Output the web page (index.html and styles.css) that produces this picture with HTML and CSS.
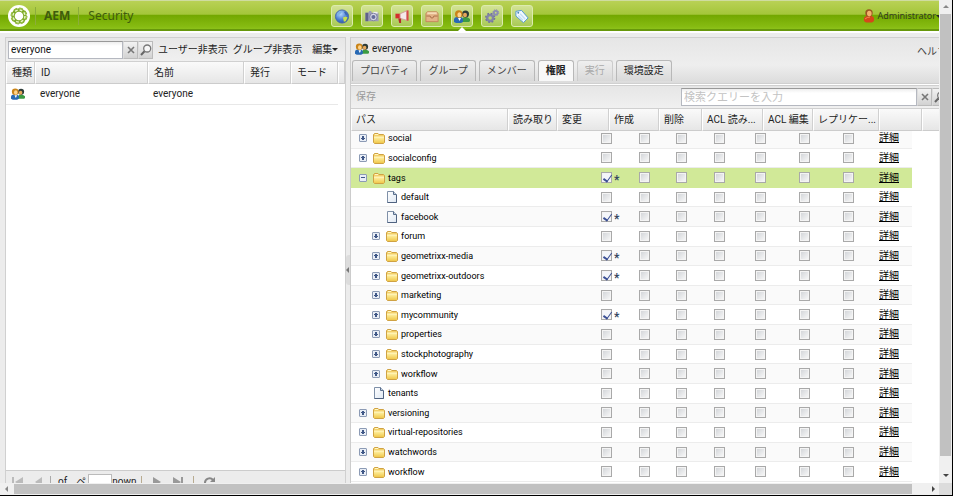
FILE: index.html
```
<!DOCTYPE html>
<html lang="ja">
<head>
<meta charset="utf-8">
<title>AEM Security</title>
<link rel="stylesheet" href="styles.css">
</head>
<body>
<svg class="defs" aria-hidden="true">
  <defs>
    <linearGradient id="fold" x1="0" y1="0" x2="0" y2="1"><stop offset="0" stop-color="#fff3a8"/><stop offset="1" stop-color="#f0c84c"/></linearGradient>
    <linearGradient id="paper" x1="0" y1="0" x2="1" y2="1"><stop offset="0" stop-color="#fff"/><stop offset="1" stop-color="#dfe8f3"/></linearGradient>
    <radialGradient id="ball" cx=".4" cy=".3" r=".8"><stop offset="0" stop-color="#b5d9ff"/><stop offset=".6" stop-color="#4478cf"/><stop offset="1" stop-color="#274f9f"/></radialGradient>
  </defs>
  <symbol id="folder" viewBox="0 0 12 12"><path d="M.5 10.500v-8l1-1H5l1 1h4.500l1 1v7l-1 1h-9z" fill="#f3d069" stroke="#cfa244"/><path d="M1 5h10v6H1z" fill="url(#fold)"/><path d="M2 2.500h3M1 5h10" stroke="#fff6c4"/></symbol>
  <symbol id="page" viewBox="0 0 12 12"><path d="M1.500.5h6l3 3v8h-9z" fill="url(#paper)" stroke="#7f90a8"/><path d="M7.500.5v3h3" fill="#c4d0df" stroke="#596e8c"/><path d="M10.500 4v7.500h-9" fill="none" stroke="#4f6280"/></symbol>
  <symbol id="users" viewBox="0 0 16 13"><path d="M8 12V9q1-2 3.500-2T16 9v2l-1 1z" fill="#3c9b42"/><circle cx="11.500" cy="4" r="3.500" fill="#2c3b38"/><ellipse cx="11" cy="5" rx="2" ry="2.300" fill="#e5a75b"/><path d="M0 12V9q.5-2 3-2h3q3 0 3 3v2l-2 1H2z" fill="#2869b4"/><circle cx="4.800" cy="4" r="3.800" fill="#c98419"/><ellipse cx="5.400" cy="4.800" rx="2" ry="2.600" fill="#ffd38a"/><path d="m4 8 1.500 3L7 8z" fill="#fff"/></symbol>
  <symbol id="globe" viewBox="0 0 16 16"><circle cx="8" cy="8" r="7" fill="url(#ball)" stroke="#4969a6"/><path d="M2.500 5Q5 2 8 3L6.500 5 5 6 3.500 8z" fill="#7fb3e6"/><path d="m9 9 3-1 2 1-2 4-2 .5z" fill="#c9e04c"/><path d="m10 3 2 0 2 3-2 .5z" fill="#3c66b4"/></symbol>
  <symbol id="camera" viewBox="0 0 16 16"><path d="M1 4h3l1-2h2l1 2h7v9H1z" fill="#9b9cb9"/><path d="M1 4h3v9H1z" fill="#60618a"/><path d="M9 3h5v2H9z" fill="#eee"/><circle cx="9.500" cy="8.500" r="4" fill="#d7d8e6" stroke="#7b7c9c"/><circle cx="9.500" cy="8.500" r="2.200" fill="#656c9a"/></symbol>
  <symbol id="horn" viewBox="0 0 16 16"><path d="M1 5h5v5H1z" fill="#d32d2d"/><path d="m6 5 7-3v10L6 10z" fill="#f5eaea" stroke="#d59c9c"/><path d="M13 1.500h2v11h-2z" fill="#d8494a"/><path d="M4 10h3v5H5z" fill="#b5282b"/></symbol>
  <symbol id="mail" viewBox="0 0 16 16"><path d="M1.500 5 3 3h10l1.500 2v8.500h-13z" fill="#e3b286" stroke="#c18659"/><path d="M2 7.500h4l1 2h2l1-2h4" fill="none" stroke="#a96d48"/><path d="M3 4.500h10" stroke="#f6dcb8" stroke-width="2"/></symbol>
  <symbol id="gears" viewBox="0 0 16 16"><circle cx="6" cy="9.500" r="3.200" fill="none" stroke="#8384a8" stroke-width="2.600"/><circle cx="6" cy="9.500" r="4.800" fill="none" stroke="#73749b" stroke-width="1.500" stroke-dasharray="2 1.770"/><circle cx="12" cy="4" r="2" fill="none" stroke="#8c8db0" stroke-width="2"/><circle cx="12" cy="4" r="3.200" fill="none" stroke="#8c8db0" stroke-dasharray="1.500 1"/></symbol>
  <symbol id="tag" viewBox="0 0 16 16"><path d="m1.500 2.500 6-1 7 8-5 5-8-7z" fill="#f2f9ff" stroke="#4f98d6"/><path d="m6 5 5.500 6M4 7l5 5" stroke="#c3dff6" stroke-width="1.500"/><circle cx="4" cy="4" r="1" fill="#4b87bd"/></symbol>
  <symbol id="admin" viewBox="0 0 12 14"><path d="M1 12V9q1-2.500 5-2.500T11 9v3l-2 1.500H3z" fill="#d4481b"/><circle cx="6" cy="4" r="3.700" fill="#9b5522"/><ellipse cx="6.300" cy="4.500" rx="2.300" ry="2.800" fill="#f3b26c"/><path d="M2 10q2-2 5-2" stroke="#f38b50" fill="none"/></symbol>
  <symbol id="lens" viewBox="0 0 12 12"><circle cx="7.200" cy="4.500" r="3.500" fill="#f7f7f7" stroke="#777" stroke-width="1.300"/><path d="M4.500 7.200 1 11" stroke="#666" stroke-width="2"/></symbol>
  <symbol id="cross" viewBox="0 0 8 8"><path d="m1 1 6 6M7 1 1 7" stroke="#777" stroke-width="1.600"/></symbol>
</svg>

<div class="window">
  <div class="viewport">
    <div class="app">
      <header class="topbar">
        <div class="brand">
          <svg class="logo" viewBox="0 0 22 22"><circle cx="11" cy="11" r="11" fill="#fff"/><circle cx="11" cy="11" r="6" fill="none" stroke="#7fac2a" stroke-width="3.500"/><circle cx="11" cy="11" r="6" fill="none" stroke="#e9f5c8" stroke-width="1.500" stroke-dasharray="2.700 2"/><circle cx="11" cy="11" r="8" fill="none" stroke="#8db92d" stroke-dasharray="4 2.280"/></svg>
          <b>AEM</b><span>Security</span>
        </div>
        <nav class="apps">
          <a href="#" aria-label="Websites"><svg><use href="#globe"/></svg></a>
          <a href="#" aria-label="Assets"><svg><use href="#camera"/></svg></a>
          <a href="#" aria-label="Campaigns"><svg><use href="#horn"/></svg></a>
          <a href="#" aria-label="Inbox"><svg><use href="#mail"/></svg></a>
          <a href="#" class="current" aria-label="Users"><svg><use href="#users"/></svg></a>
          <a href="#" aria-label="Tools"><svg><use href="#gears"/></svg></a>
          <a href="#" aria-label="Tagging"><svg><use href="#tag"/></svg></a>
        </nav>
        <button class="account"><svg><use href="#admin"/></svg>Administrator<i class="caret"></i></button>
      </header>

      <main class="panes">
        <section class="users">
          <div class="toolbar">
            <input class="field" type="text" value="everyone" aria-label="ID">
            <button class="trigger" aria-label="Clear"><svg class="x"><use href="#cross"/></svg></button>
            <button class="trigger" aria-label="Search"><svg><use href="#lens"/></svg></button>
            <button class="link">ユーザー非表示</button>
            <button class="link">グループ非表示</button>
            <button class="link edit">編集<i class="caret"></i></button>
          </div>
          <table class="list">
            <colgroup><col class="l1"><col class="l2"><col class="l3"><col class="l4"><col class="l4"><col></colgroup>
            <thead><tr><th>種類</th><th>ID</th><th>名前</th><th>発行</th><th>モード</th><th></th></tr></thead>
            <tbody><tr><td><svg class="person"><use href="#users"/></svg></td><td>everyone</td><td>everyone</td><td></td><td></td><td></td></tr></tbody>
          </table>
          <div class="pager">
            <svg class="nav" viewBox="0 0 14 12"><path d="M1 1h2v10H1zM12 1v10L4 6z" fill="#bbb"/></svg>
            <svg class="nav" viewBox="0 0 14 12"><path d="M9 1v10L2 6z" fill="#bbb"/></svg>
            <span class="of">of</span><label for="pageno">ページ</label><input id="pageno" type="text"><span class="total">nown</span>
            <svg class="nav" viewBox="0 0 14 12"><path d="M4 1v10l8-5z" fill="#999"/></svg>
            <svg class="nav" viewBox="0 0 14 12"><path d="M2 1v10l8-5zM10 1h2v10h-2z" fill="#999"/></svg>
            <svg class="nav reload" viewBox="0 0 14 12"><path d="M2 7a4.500 4.500 0 0 1 8-3" fill="none" stroke="#888" stroke-width="2"/><path d="M12 1v5H7z" fill="#888"/></svg>
          </div>
        </section>

        <div class="splitter"><button aria-label="Collapse"></button></div>

        <section class="detail">
          <div class="head">
            <div class="title"><svg class="person"><use href="#users"/></svg>everyone</div>
            <a class="help" href="#">ヘルプ</a>
            <div class="tabs">
              <button>プロパティ</button><button>グループ</button><button>メンバー</button><button class="on">権限</button><button disabled>実行</button><button>環境設定</button>
            </div>
          </div>
          <div class="toolbar perms">
            <button class="save" disabled>保存</button>
            <input class="field" type="text" placeholder="検索クエリーを入力" aria-label="検索クエリーを入力">
            <button class="trigger" aria-label="Clear"><svg class="x"><use href="#cross"/></svg></button>
            <button class="trigger" aria-label="Search"><svg><use href="#lens"/></svg></button>
          </div>
          <table class="columns">
            <colgroup><col class="c1"><col class="c2"><col class="c3"><col class="c4"><col class="c5"><col class="c6"><col class="c4"><col class="c8"><col class="c5"><col></colgroup>
            <thead><tr><th>パス</th><th>読み取り</th><th>変更</th><th>作成</th><th>削除</th><th>ACL 読み...</th><th>ACL 編集</th><th>レプリケー...</th><th></th><th></th></tr></thead>
          </table>
          <div class="scroll">
            <table class="tree">
              <colgroup><col class="t1"><col class="t2"><col class="t3"><col class="t2"><col class="t4"><col class="t5"><col class="t5"><col class="t6"><col class="t7"></colgroup>
              <tbody id="rows"></tbody>
            </table>
          </div>
        </section>
      </main>
    </div>
  </div>
  <div class="vbar"><i class="up"></i><div class="thumb"></div><i class="down"></i></div>
  <div class="hbar"><i class="left"></i><div class="thumb"></div><i class="right"></i></div>
  <div class="corner"></div>
</div>
<script src="tree.js"></script>
</body>
</html>
```
FILE: tree.js
```
// name, depth, kind (f folder, p page), read granted
const nodes = [
  ["social", 0, "f", 0], ["socialconfig", 0, "f", 0], ["tags", 0, "f", 1],
  ["default", 1, "p", 0], ["facebook", 1, "p", 1], ["forum", 1, "f", 0],
  ["geometrixx-media", 1, "f", 1], ["geometrixx-outdoors", 1, "f", 1],
  ["marketing", 1, "f", 0], ["mycommunity", 1, "f", 1], ["properties", 1, "f", 0],
  ["stockphotography", 1, "f", 0], ["workflow", 1, "f", 0], ["tenants", 0, "p", 0],
  ["versioning", 0, "f", 0], ["virtual-repositories", 0, "f", 0],
  ["watchwords", 0, "f", 0], ["workflow", 0, "f", 0]
];
const rights = ["読み取り", "変更", "作成", "削除", "ACL 読み取り", "ACL 編集", "レプリケート"];
document.getElementById("rows").innerHTML = nodes.map(([name, depth, kind, read]) => {
  const open = name === "tags";
  const toggle = kind === "f"
    ? `<button class="toggle${open ? " open" : ""}" aria-label="${name}"></button>`
    : `<span class="blank"></span>`;
  const icon = `<svg class="node"><use href="#${kind === "f" ? "folder" : "page"}"/></svg>`;
  const boxes = rights.map((right, i) =>
    `<td><span class="check"><input type="checkbox" aria-label="${name} ${right}"${i === 0 && read ? " checked" : ""}>${i === 0 && read ? "<b>*</b>" : ""}</span></td>`
  ).join("");
  return `<tr${open ? ' class="selected"' : ""}><td><div class="path depth${depth}">${toggle}${icon}${name}</div></td>${boxes}<td><a href="#">詳細</a></td></tr>`;
}).join("");
```
FILE: styles.css
```
* { box-sizing: border-box; }
html, body { height: 100%; margin: 0; }
body { font: 10px/14px Roboto, "Noto Sans CJK JP", sans-serif; color: #222; overflow: hidden; }
button, input { font: inherit; color: inherit; margin: 0; }
button { border: 0; background: none; padding: 0; white-space: nowrap; }
a { color: inherit; }
svg { display: block; flex: none; }
table { border-collapse: separate; border-spacing: 0; table-layout: fixed; width: 100%; }
th, td { padding: 0; text-align: left; font-weight: 400; white-space: nowrap; overflow: hidden; }
.defs { position: absolute; width: 0; height: 0; }

.window { display: grid; grid-template: minmax(0, 1fr) 12px / minmax(0, 1fr) 13px; height: 100%; border: solid #000; border-width: 0 1px 1px 0; background: #f0f0f0; }
.viewport { overflow: hidden; background: #ececec; }
.app { display: flex; flex-direction: column; width: calc(100% + 10px); height: 100%; }

.topbar { display: flex; align-items: center; flex: none; height: 33px; padding-right: 7px; border-top: 1px solid #cfdca0; border-bottom: 2px solid #fff; background: linear-gradient(#b9d155, #a4c63a 44%, #73a800 48%, #86bb12 85%, #8dc21b 94%, #67980b 95%); }
.brand { display: flex; align-items: center; flex: none; width: 331px; padding-left: 8px; color: #3f5c0c; font: 12px/18px "Noto Sans", sans-serif; }
.brand b { margin-left: 5px; padding-left: 8px; border-left: 1px solid #8cad3c; }
.brand span { margin-left: 8px; padding-left: 9px; border-left: 1px solid #8cad3c; }
.logo { width: 22px; height: 22px; }
.apps { display: flex; gap: 8px; flex: 1; }
.apps a { display: grid; place-items: center; position: relative; width: 22px; height: 22px; border: 1px solid #dcebaf; border-radius: 3px; background: linear-gradient(#d3e396, #a9ca56); }
.apps svg { width: 16px; height: 15px; }
.current::after { content: ""; position: absolute; top: 21px; left: 5px; border: 5px solid transparent; border-top: 0; border-bottom-color: #fff; }
.account { display: flex; align-items: center; color: #333d20; font: 9px/14px "Noto Sans", sans-serif; }
.account svg { width: 12px; height: 14px; margin-right: 3px; }
.caret { display: inline-block; width: 0; border: 3px solid transparent; border-top-color: #222; border-bottom: 0; vertical-align: middle; }

.panes { display: flex; flex: 1; min-height: 0; padding: 4px 0 0 5px; }
.users { display: flex; flex-direction: column; flex: 0 0 341px; border: 1px solid #d0d0d0; border-bottom: 0; background: #fff; }
.toolbar { display: flex; align-items: center; flex: none; height: 24px; padding-left: 2px; border-bottom: 1px solid #d0d0d0; background: linear-gradient(#e6e6e6, #f0f0f0); }
.field { width: 115px; height: 18px; padding: 0 2px; border: 1px solid #b5b8c0; border-top-color: #999; border-radius: 0; background: linear-gradient(#eee, #fff 4px); color: #111; outline: 0; }
.trigger { display: grid; place-items: center; flex: none; width: 15px; height: 18px; border: 1px solid #bbb; border-left-color: #ddd; background: linear-gradient(#f2f2f2, #d2d2d2); }
.trigger svg { width: 12px; height: 12px; }
.trigger .x { width: 8px; height: 8px; }
.link { margin-left: 5px; }
.link.edit { margin-left: 10px; }

th { height: 22px; padding-left: 5px; border-right: 1px solid #d0d0d0; border-left: 1px solid #fff; border-bottom: 1px solid #ccc; background: linear-gradient(#fafafa, #e6e6e6); }
.l1 { width: 29px; } .l2 { width: 113px; } .l3 { width: 96px; } .l4 { width: 47px; }
.list td { height: 21px; padding-left: 5px; border-bottom: 1px solid #e8e8e8; }
.list td:last-child { border-bottom: 0; }
.person { width: 14px; height: 12px; }

.pager { display: flex; flex: none; height: 13px; margin-top: auto; padding: 5px 0 0 5px; border-top: 1px solid #ccc; background: #ececec; overflow: hidden; line-height: 12px; }
.nav { width: 14px; height: 12px; margin-right: 8px; }
.pager > .nav:nth-child(2) { margin-right: 3px; }
.of { padding-left: 7px; border-left: 1px solid #aaa; }
.pager label { width: 10px; margin: 0 2px 0 9px; overflow: hidden; white-space: nowrap; }
.pager input { width: 24px; height: 18px; border: 1px solid #bbb; background: #fff; margin-top: -2px; }
.total { margin-right: 7px; padding-right: 5px; border-right: 1px solid #b8ab90; }
.reload { width: 24px; padding-left: 9px; border-left: 1px solid #b8ab90; }

.splitter { display: flex; align-items: center; flex: none; width: 4px; background: #ececec; }
.splitter button { width: 4px; height: 30px; margin-top: 20px; border-radius: 3px 0 0 3px; background: #dcdcdc; }
.splitter button::before { content: ""; display: block; width: 0; border: 3px solid transparent; border-right-color: #777; border-left: 0; }

.detail { display: flex; flex-direction: column; flex: 1; min-width: 0; border-left: 1px solid #ccc; background: #fff; }
.head { display: grid; grid-template: 22px 23px / 1fr auto; flex: none; border: solid #d0d0d0; border-width: 1px 0; background: linear-gradient(#e6e6e6, #eee 60%, #dcdcdc); }
.title { display: flex; align-items: center; gap: 3px; padding-left: 4px; }
.help { grid-row: 1 / 3; grid-column: 2; width: 32px; padding-top: 7px; text-decoration: none; color: #444; }
.tabs { display: flex; gap: 3px; padding-left: 1px; }
.tabs button { height: 21px; padding: 0 7px; border: 1px solid #b8b8b8; border-bottom: 0; border-radius: 3px 3px 0 0; background: linear-gradient(#efefef, #d9d9d9); color: #444; }
.tabs .on { background: #f8f8f8; font-weight: 700; color: #222; }
.tabs button:disabled { color: #aaa; border-color: #ccc; }
.tabs button:last-child { color: #222; }
.perms { height: 24px; margin-top: 1px; padding: 0 2px 0 5px; border-top: 1px solid #d0d0d0; }
.perms .field { width: 236px; margin-left: auto; font-size: 11px; }
.field::placeholder { color: #c3c3c3; }
.save { color: #999; }
.c1 { width: 157px; } .c2 { width: 49px; } .c3 { width: 52px; } .c4 { width: 50px; } .c5 { width: 43px; } .c6 { width: 61px; } .c8 { width: 66px; }
.columns { flex: none; }
.columns th { padding-left: 4px; }

.scroll { display: flex; flex-direction: column; justify-content: flex-end; flex: 1; min-height: 0; padding-bottom: 1px; overflow: hidden; }
.tree { width: 561px; height: 353px; flex: none; color: #000; }
.t1 { width: 250px; } .t2 { width: 38px; } .t3 { width: 37px; } .t4 { width: 41px; } .t5 { width: 44px; } .t6 { width: 36px; } .t7 { width: 33px; }
.tree td { border-bottom: 1px solid #ececec; vertical-align: middle; line-height: 14px; }
.tree tr:nth-child(odd) { background: #fafafa; }
.tree tr.selected { background: #d1e998; }
.tree .selected td { border-color: #d1e998; }
.tree td a { color: #000; }
.path { display: flex; align-items: center; font-size: 9px; }
.depth0 { padding-left: 8px; }
.depth1 { padding-left: 21px; }
.node { width: 12px; height: 12px; margin: 0 3px 0 6px; }
.toggle, .blank { flex: none; width: 8px; height: 8px; }
.toggle { border: 1px solid #8c9bb5; border-radius: 1px; background: linear-gradient(#405887, #405887) center / 4px 1px no-repeat, linear-gradient(#405887, #405887) center / 2px 4px no-repeat, #e9eef6; }
.toggle.open { background: linear-gradient(#405887, #405887) center / 4px 1px no-repeat, #e9eef6; }
.check { display: flex; align-items: center; gap: 2px; }
.check input { appearance: none; flex: none; width: 11px; height: 11px; border: 1px solid #a9a9a9; background: linear-gradient(135deg, #cfd2d6, #fafafa); box-shadow: inset 0 0 0 1px #f4f4f4; }
.check input:checked { background: #f4f6fa; }
.check input:checked::before { content: ""; display: block; width: 4px; height: 7px; margin-left: 3px; border: solid #3b4f94; border-width: 0 1px 2px 0; transform: rotate(35deg); }
.check b { height: 10px; font-size: 12px; color: #34465f; }

.vbar, .hbar { display: flex; align-items: center; background: #f0f0f0; }
.vbar { flex-direction: column; }
.thumb { background: #c1c1c1; }
.vbar .thumb { flex: 1; width: 11px; margin: 6px 0 18px; }
.hbar .thumb { flex: 1; height: 10px; margin: 0 20px 0 6px; }
.vbar i, .hbar i { flex: none; width: 0; height: 0; border: 3px solid transparent; }
.up { border-top: 0 !important; border-bottom-color: #888 !important; margin-top: 5px; }
.down { border-bottom: 0 !important; border-top-color: #444 !important; margin-bottom: 6px; }
.left { border-left: 0 !important; border-right-color: #888 !important; margin-left: 5px; }
.right { border-right: 0 !important; border-left-color: #444 !important; margin-right: 4px; }
.corner { background: #dcdcdc; }
```
